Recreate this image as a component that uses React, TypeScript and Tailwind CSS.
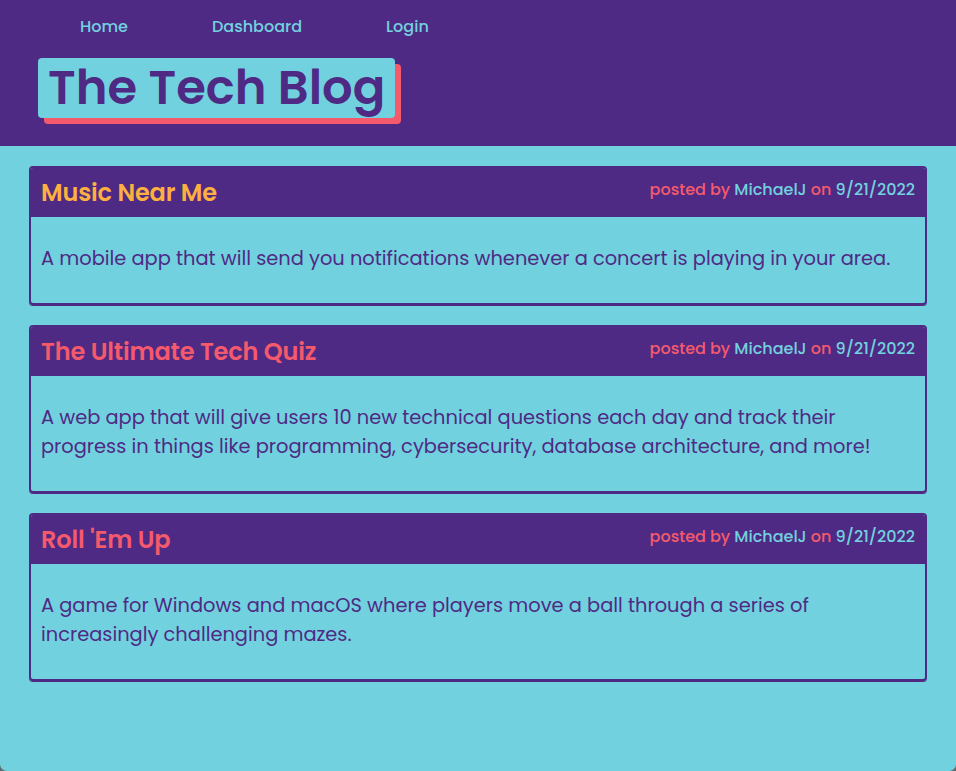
import React from 'react';

interface Post {
  title: string;
  titleColor: string;
  author: string;
  date: string;
  body: string;
}

const posts: Post[] = [
  {
    title: 'Music Near Me',
    titleColor: 'text-[#fdb03f]',
    author: 'MichaelJ',
    date: '9/21/2022',
    body: 'A mobile app that will send you notifications whenever a concert is playing in your area.',
  },
  {
    title: 'The Ultimate Tech Quiz',
    titleColor: 'text-[#f55a6c]',
    author: 'MichaelJ',
    date: '9/21/2022',
    body: 'A web app that will give users 10 new technical questions each day and track their progress in things like programming, cybersecurity, database architecture, and more!',
  },
  {
    title: "Roll 'Em Up",
    titleColor: 'text-[#f55a6c]',
    author: 'MichaelJ',
    date: '9/21/2022',
    body: 'A game for Windows and macOS where players move a ball through a series of increasingly challenging mazes.',
  },
];

function PostCard({ post }: { post: Post }) {
  return (
    <article className="rounded-[4px] border-2 border-[#4e2a84] shadow-[0_1px_0_#4e2a84] overflow-hidden">
      <div className="bg-[#4e2a84] h-[49px] flex justify-between items-start px-[10px]">
        <h2 className={`${post.titleColor} text-[24px] font-semibold tracking-[-0.15px] mt-[10px] leading-[30px]`}>
          {post.title}
        </h2>
        <p className="text-[16px] font-medium mt-[10px] leading-[24px] text-[#f55a6c]">
          posted by <span className="text-[#72d1de]">{post.author}</span> on{' '}
          <span className="text-[#72d1de]">{post.date}</span>
        </p>
      </div>
      <div className="px-[10px] pt-[27px] pb-[30px]">
        <p className="text-[19.4px] leading-[29px] text-[#4e2a84]">{post.body}</p>
      </div>
    </article>
  );
}

export default function App() {
  return (
    <div className="bg-[#5e6b6e]">
      <div className="min-h-[771px] bg-[#72d1de] rounded-b-[7px] overflow-hidden font-['Poppins','Noto_Sans',sans-serif]">
        <header className="bg-[#4e2a84] h-[146px] pt-[16px] pl-[38px]">
          <nav className="flex gap-[84px] pl-[42px] text-[16px] font-medium leading-[22px] text-[#72d1de]">
            <a href="#">Home</a>
            <a href="#">Dashboard</a>
            <a href="#">Login</a>
          </nav>
          <h1 className="mt-[20px] inline-block bg-[#72d1de] rounded-[4px] shadow-[6px_6px_0_#f55a6c] px-[10px] h-[60px] text-[48px] leading-[60px] font-semibold text-[#4e2a84]">
            The Tech Blog
          </h1>
        </header>
        <main className="px-[29px] pt-[20px] pb-[40px] flex flex-col gap-[20px]">
          {posts.map((post, i) => (
            <PostCard key={i} post={post} />
          ))}
        </main>
      </div>
    </div>
  );
}
